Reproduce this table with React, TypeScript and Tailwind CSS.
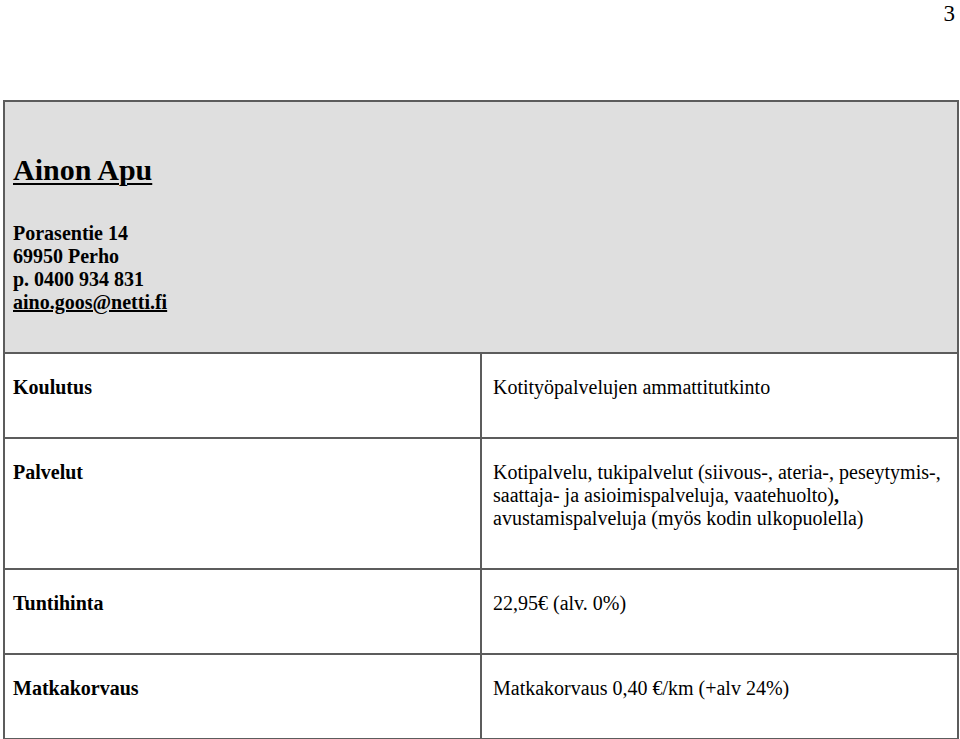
import React from "react";

export default function App() {
  return (
    <div className="w-[960px] h-[739px] bg-white text-black font-['Liberation_Serif',serif] overflow-hidden">
      <div className="h-[100px] flex justify-end pr-[5px] pt-[1px]">
        <span className="text-[23px] leading-[26px]">3</span>
      </div>
      <div className="ml-[3px] w-[956px] border-2 border-[#5c5c5c] flex flex-col">
        <div className="h-[250px] bg-[#dfdfdf] pl-[8px] pt-[53px]">
          <div className="text-[30px] leading-[30px] font-bold underline decoration-2 underline-offset-[3px]">
            Ainon Apu
          </div>
          <div className="mt-[37px] text-[20px] leading-[23px] font-bold">
            <div>Porasentie 14</div>
            <div>69950 Perho</div>
            <div>p. 0400 934 831</div>
            <div className="underline">aino.goos@netti.fi</div>
          </div>
        </div>
        <div className="h-[85px] border-t-2 border-[#5c5c5c] flex">
          <div className="w-[475px] pl-[8px] pt-[22px] text-[20px] leading-[23px] font-bold">Koulutus</div>
          <div className="flex-1 border-l-2 border-[#5c5c5c] pl-[11px] pt-[22px] text-[20px] leading-[23px]">
            Kotityöpalvelujen ammattitutkinto
          </div>
        </div>
        <div className="h-[131px] border-t-2 border-[#5c5c5c] flex">
          <div className="w-[475px] pl-[8px] pt-[22px] text-[20px] leading-[23px] font-bold">Palvelut</div>
          <div className="flex-1 border-l-2 border-[#5c5c5c] pl-[11px] pt-[22px] text-[20px] leading-[23px]">
            Kotipalvelu, tukipalvelut (siivous-, ateria-, peseytymis-,
            <br />
            saattaja- ja asioimispalveluja, vaatehuolto)<span className="font-bold">,</span>
            <br />
            avustamispalveluja (myös kodin ulkopuolella)
          </div>
        </div>
        <div className="h-[85px] border-t-2 border-[#5c5c5c] flex">
          <div className="w-[475px] pl-[8px] pt-[22px] text-[20px] leading-[23px] font-bold">Tuntihinta</div>
          <div className="flex-1 border-l-2 border-[#5c5c5c] pl-[11px] pt-[22px] text-[20px] leading-[23px]">
            22,95€ (alv. 0%)
          </div>
        </div>
        <div className="h-[85px] border-t-2 border-[#5c5c5c] flex">
          <div className="w-[475px] pl-[8px] pt-[22px] text-[20px] leading-[23px] font-bold">Matkakorvaus</div>
          <div className="flex-1 border-l-2 border-[#5c5c5c] pl-[11px] pt-[22px] text-[20px] leading-[23px]">
            Matkakorvaus 0,40 €/km (+alv 24%)
          </div>
        </div>
      </div>
    </div>
  );
}
